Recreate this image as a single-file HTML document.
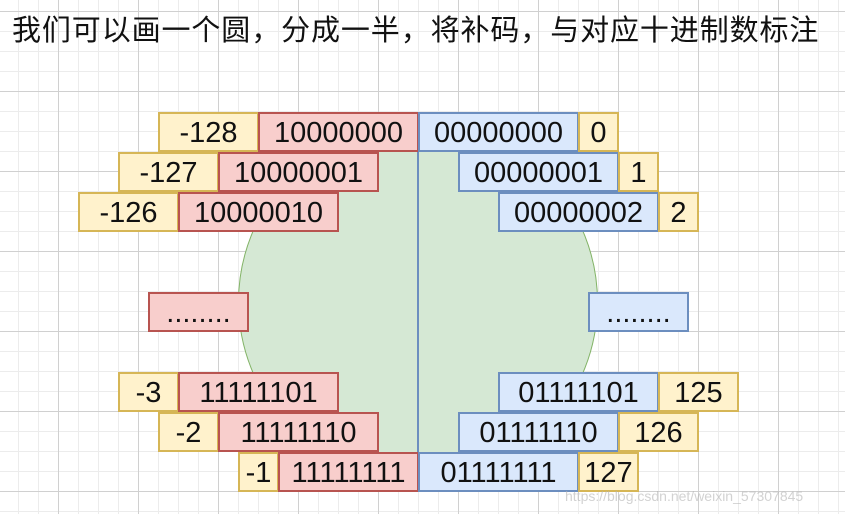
<!DOCTYPE html>
<html><head><meta charset="utf-8"><style>
html,body{margin:0;padding:0;}
body{width:845px;height:514px;position:relative;overflow:hidden;background:#fff;
background-image:
linear-gradient(to right,#d0d0d0 1px,transparent 1px),
linear-gradient(to bottom,#d0d0d0 1px,transparent 1px),
linear-gradient(to right,#ececec 1px,transparent 1px),
linear-gradient(to bottom,#ececec 1px,transparent 1px);
background-size:80px 80px,80px 80px,20px 20px,20px 20px;
background-position:58px 11px,58px 11px,18px 11px,18px 11px;
font-family:"Liberation Sans",Arial,sans-serif;}
.t{position:absolute;left:12px;top:11px;font-family:"Liberation Sans","Noto Sans CJK SC",sans-serif;font-size:29px;letter-spacing:0.9px;color:#111;white-space:nowrap;line-height:40px;}
.b{position:absolute;box-sizing:border-box;height:40px;line-height:38px;text-align:center;font-size:29px;color:#111;border:2px solid;}
.y{background:#fff2cc;border-color:#d6b656}
.r{background:#f8cecc;border-color:#b85450}
.u{background:#dae8fc;border-color:#6c8ebf}
</style></head><body>
<div class="t">我们可以画一个圆，分成一半，将补码，与对应十进制数标注</div>
<div style="position:absolute;left:238px;top:122px;width:360px;height:360px;box-sizing:border-box;border-radius:50%;background:#d5e8d4;border:1.5px solid #82b366"></div>
<div style="position:absolute;left:417px;top:112px;width:2px;height:380px;background:#6c8ebf"></div>

<div class="b y" style="left:158px;top:112px;width:101px">-128</div>
<div class="b r" style="left:258px;top:112px;width:161px">10000000</div>
<div class="b u" style="left:418px;top:112px;width:161px">00000000</div>
<div class="b y" style="left:578px;top:112px;width:41px">0</div>

<div class="b y" style="left:118px;top:152px;width:101px">-127</div>
<div class="b r" style="left:218px;top:152px;width:161px">10000001</div>
<div class="b u" style="left:458px;top:152px;width:161px">00000001</div>
<div class="b y" style="left:618px;top:152px;width:41px">1</div>

<div class="b y" style="left:78px;top:192px;width:101px">-126</div>
<div class="b r" style="left:178px;top:192px;width:161px">10000010</div>
<div class="b u" style="left:498px;top:192px;width:161px">00000002</div>
<div class="b y" style="left:658px;top:192px;width:41px">2</div>

<div class="b r" style="left:148px;top:292px;width:101px">........</div>
<div class="b u" style="left:588px;top:292px;width:101px">........</div>

<div class="b y" style="left:118px;top:372px;width:61px">-3</div>
<div class="b r" style="left:178px;top:372px;width:161px">11111101</div>
<div class="b u" style="left:498px;top:372px;width:161px">01111101</div>
<div class="b y" style="left:658px;top:372px;width:81px">125</div>

<div class="b y" style="left:158px;top:412px;width:61px">-2</div>
<div class="b r" style="left:218px;top:412px;width:161px">11111110</div>
<div class="b u" style="left:458px;top:412px;width:161px">01111110</div>
<div class="b y" style="left:618px;top:412px;width:81px">126</div>

<div class="b y" style="left:238px;top:452px;width:41px">-1</div>
<div class="b r" style="left:278px;top:452px;width:141px">11111111</div>
<div class="b u" style="left:418px;top:452px;width:161px">01111111</div>
<div class="b y" style="left:578px;top:452px;width:61px">127</div>

<div style="position:absolute;left:565px;top:488px;font-size:14px;color:rgba(180,180,180,0.6);white-space:nowrap">https://blog.csdn.net/weixin_57307845</div>
</body></html>
